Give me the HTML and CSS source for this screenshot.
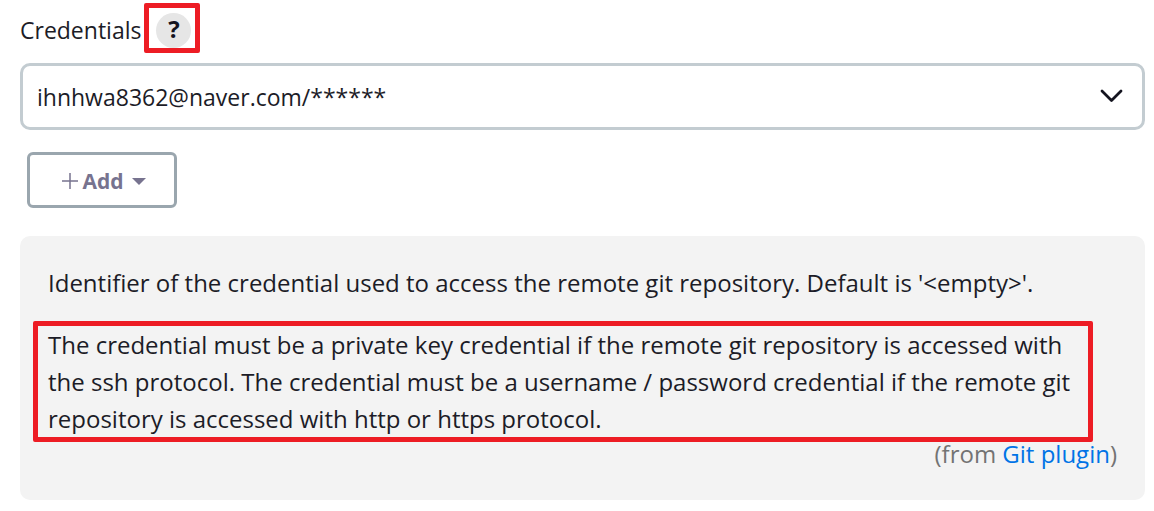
FILE: index.html
```
<!DOCTYPE html>
<html lang="en">
<head>
<meta charset="utf-8">
<title>Credentials</title>
<link rel="stylesheet" href="styles.css">
</head>
<body>
<main class="form">
  <div class="label-row">
    <label class="label" for="cred">Credentials</label>
    <span class="help-frame"><button class="help" type="button" aria-label="Help">?</button></span>
  </div>
  <div class="select-wrap">
    <select class="select" id="cred"><option>ihnhwa8362@naver.com/******</option></select>
    <svg class="chevron" viewBox="0 0 24 16" aria-hidden="true"><path d="M2 3l9.500 9.500L21 3" fill="none" stroke="#14141f" stroke-width="2.800" stroke-linecap="round" stroke-linejoin="round"/></svg>
  </div>
  <button class="add" type="button">
    <svg class="plus" viewBox="0 0 16 16" aria-hidden="true"><path d="M8 0v16M0 8h16" stroke="#77738f" stroke-width="1.500"/></svg>
    <span>Add</span>
    <svg class="caret" viewBox="0 0 14 7" aria-hidden="true"><path d="M0 0h14L7 7z" fill="#77738f"/></svg>
  </button>
  <section class="help-panel">
    <p class="intro">Identifier of the credential used to access the remote git repository. Default is '&lt;empty&gt;'.</p>
    <p class="marked">The credential must be a private key credential if the remote git repository is accessed with the ssh protocol. The credential must be a username / password credential if the remote git repository is accessed with http or https protocol.</p>
    <p class="source">(from <a href="#">Git plugin</a>)</p>
  </section>
</main>
</body>
</html>
```
FILE: styles.css
```
* { box-sizing: border-box; }
body {
  margin: 0;
  background: #fff;
  color: #1c1c27;
  font: 24px/37px "Open Sans", "Noto Sans", sans-serif;
}
p { margin: 0; }
.form { padding: 3px 9px 11px 20px; }
.label-row { display: flex; align-items: center; gap: 3px; }
.label { font-size: 23px; padding-top: 5px; }
.help-frame { display: flex; border: 5px solid #ed1c24; border-radius: 2px; padding: 5px 4px 0 7px; }
.help {
  width: 35px; height: 35px; padding: 0 0 4px; border: 0; border-radius: 50%;
  background: #e6e6e6; color: #14141f; font: 700 24px/30px "Open Sans", "Noto Sans", sans-serif;
}
.select-wrap { position: relative; margin-top: 10px; }
.select {
  display: block; width: 100%; height: 67px; padding: 2px 14px 0; appearance: none;
  border: 3px solid #c3ccd1; border-radius: 10px; background: #fff; color: #1c1c27;
  font: 23px/37px "Open Sans", "Noto Sans", sans-serif;
}
.chevron { position: absolute; right: 21px; top: 25px; width: 24px; height: 16px; }
.add {
  display: flex; align-items: center; justify-content: center; gap: 4px;
  width: 150px; height: 56px; margin: 22px 0 28px 7px; padding: 2px 0 0 4px;
  border: 3px solid #9aa6ae; border-radius: 6px; background: #fff; color: #77738f;
  font: 700 21px/32px "Open Sans", "Noto Sans", sans-serif;
}
.plus { width: 16px; height: 16px; }
.caret { width: 14px; height: 7px; margin-left: 4px; }
.help-panel { padding: 28px 28px 34px 13px; border-radius: 10px; background: #f3f3f3; }
.intro { padding-left: 15px; }
.marked { width: 1060px; max-width: 100%; margin-top: 20px; padding: 0 0 0 10px; border: 5px solid #ed1c24; border-radius: 2px; }
.source { text-align: right; color: #737373; line-height: 24px; }
.source a { color: #0073e6; text-decoration: none; }
```
